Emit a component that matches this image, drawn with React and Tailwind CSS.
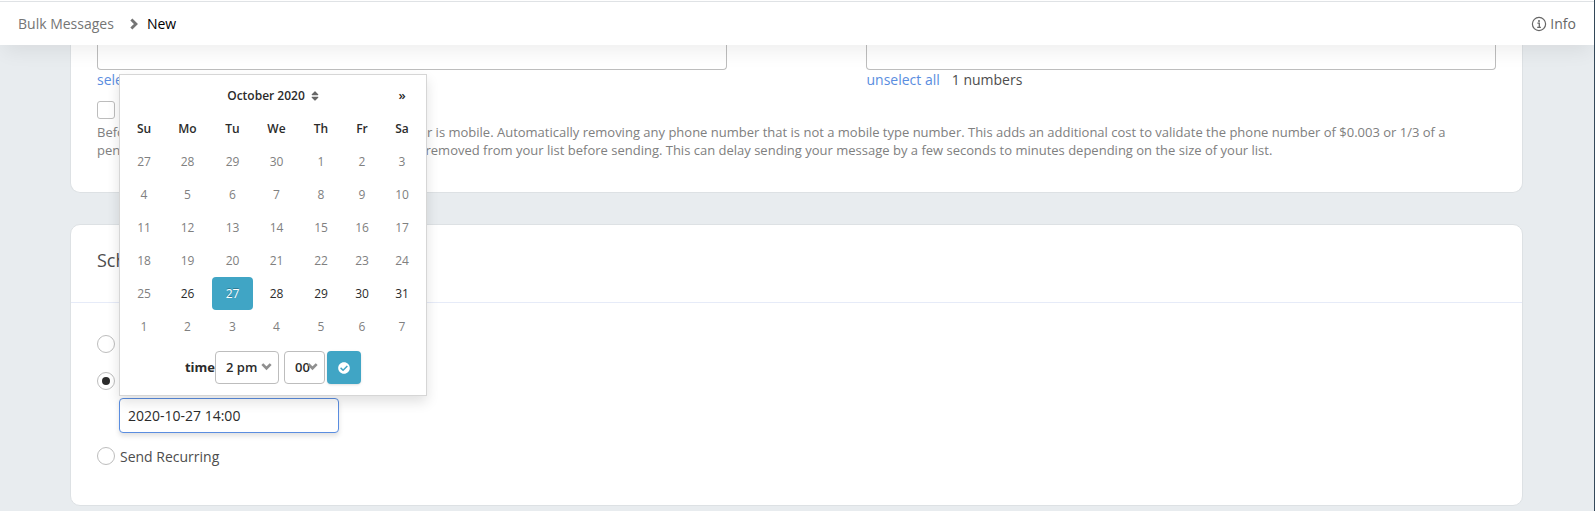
import { useState } from 'react';
import { FaCheckCircle, FaSort } from 'react-icons/fa';

const WEEKDAYS = ['Su', 'Mo', 'Tu', 'We', 'Th', 'Fr', 'Sa'];
const HOURS = Array.from({ length: 24 }, (_, h) => `${h % 12 || 12} ${h < 12 ? 'am' : 'pm'}`);
const MINUTES = ['00', '15', '30', '45'];
const TODAY = new Date(2020, 9, 26);

function buildWeeks(year, month) {
  const startPad = new Date(year, month, 1).getDay();
  return Array.from({ length: 6 }, (_, w) =>
    Array.from({ length: 7 }, (_, d) => new Date(year, month, 1 - startPad + w * 7 + d))
  );
}

function Chevron({ className }) {
  return (
    <svg viewBox="0 0 10 10" fill="none" stroke="currentColor" strokeWidth="2.4" className={className}>
      <path d="M1.2 2.8 L5 6.6 L8.8 2.8" />
    </svg>
  );
}

function InfoIcon({ className }) {
  return (
    <svg viewBox="0 0 16 16" fill="none" stroke="currentColor" strokeWidth="1.2" className={className}>
      <circle cx="8" cy="8" r="6.6" />
      <circle cx="8" cy="4.9" r="1" fill="currentColor" stroke="none" />
      <path d="M6.4 7.2 H8.3 V11.2 M6.2 11.3 H9.9" strokeWidth="1.3" />
    </svg>
  );
}

function TimeSelect({ label, value, options, onChange, className }) {
  return (
    <div className={`relative ${className}`}>
      <select
        aria-label={label}
        value={value}
        onChange={(e) => onChange(e.target.value)}
        className="h-[33px] w-full appearance-none rounded border border-[#bdbdbd] bg-white pl-2.5 text-[13px] font-semibold text-[#2b2b2b] outline-none"
      >
        {options.map((o) => (
          <option key={o}>{o}</option>
        ))}
      </select>
      <Chevron className="pointer-events-none absolute top-2.5 right-[7px] size-[11px] text-[#8f8f8f]" />
    </div>
  );
}

function DateTimePicker({ day, onDay, hour, onHour, minute, onMinute }) {
  const weeks = buildWeeks(2020, 9);

  return (
    <div className="absolute bottom-full left-0 z-10 mb-0.5 w-[308px] border border-[#d6d6d6] bg-white px-[5px] pt-1 pb-[11px] text-[13px] text-[#2b2b2b] shadow-[0_6px_12px_rgba(0,0,0,0.12)]">
      <div className="grid h-[33px] grid-cols-[40px_1fr_38px] items-center">
        <span />
        <button type="button" className="flex items-center justify-center gap-1 text-[12px] font-semibold">
          October 2020
          <FaSort className="size-3 text-[#666]" />
        </button>
        <button type="button" aria-label="Next month" className="font-semibold">
          »
        </button>
      </div>
      <table className="w-full table-fixed border-collapse text-center">
        <colgroup>
          <col className="w-[38px]" />
          <col className="w-[49px]" />
          <col className="w-[41px]" />
          <col className="w-[47px]" />
          <col className="w-[42px]" />
          <col className="w-[40px]" />
          <col className="w-[40px]" />
        </colgroup>
        <thead>
          <tr className="h-[33px]">
            {WEEKDAYS.map((w) => (
              <th key={w} className="p-0 text-[12px] font-semibold">
                {w}
              </th>
            ))}
          </tr>
        </thead>
        <tbody>
          {weeks.map((week) => (
            <tr key={week[0].getTime()} className="h-[33px]">
              {week.map((d) => {
                const inMonth = d.getMonth() === 9;
                const isSelected = inMonth && d.getDate() === day;
                const isMuted = !inMonth || d < TODAY;
                return (
                  <td key={d.getTime()} className="p-0">
                    <button
                      type="button"
                      disabled={isMuted}
                      onClick={() => onDay(d.getDate())}
                      className={`block h-[33px] w-full rounded text-[12px] ${
                        isSelected
                          ? 'bg-[#40a5c5] text-white [text-shadow:0_-1px_0_rgba(0,0,0,0.25)]'
                          : isMuted
                            ? 'text-[#808080]'
                            : 'text-[#2b2b2b]'
                      }`}
                    >
                      {d.getDate()}
                    </button>
                  </td>
                );
              })}
            </tr>
          ))}
        </tbody>
      </table>
      <div className="mt-2 flex items-center justify-center">
        <span className="text-[13px] font-bold">time</span>
        <TimeSelect label="Hour" value={hour} options={HOURS} onChange={onHour} className="mr-[5px] w-16" />
        <TimeSelect label="Minute" value={minute} options={MINUTES} onChange={onMinute} className="mr-0.5 w-[41px]" />
        <button
          type="button"
          aria-label="Apply"
          className="flex h-[33px] w-[34px] items-center justify-center rounded bg-[#40a5c5] text-white shadow-sm"
        >
          <FaCheckCircle className="size-3" />
        </button>
      </div>
    </div>
  );
}

function ScheduleRadio({ label, value, current, onChange }) {
  return (
    <label className="flex h-5 items-center gap-[5px] text-[14px] text-[#4d4d4d]">
      <span className="relative flex size-[18px] items-center justify-center">
        <input
          type="radio"
          name="schedule"
          value={value}
          checked={current === value}
          onChange={() => onChange(value)}
          className="peer size-[18px] appearance-none rounded-full border border-[#bdbdbd] bg-white"
        />
        <span className="pointer-events-none absolute hidden size-2 rounded-full bg-[#2b2b2b] peer-checked:block" />
      </span>
      {label}
    </label>
  );
}

export default function App() {
  const [schedule, setSchedule] = useState('later');
  const [day, setDay] = useState(27);
  const [hour, setHour] = useState('2 pm');
  const [minute, setMinute] = useState('00');
  const [mobileOnly, setMobileOnly] = useState(false);

  const sendAt = `2020-10-${String(day).padStart(2, '0')} ${HOURS.indexOf(hour)}:${minute}`;

  return (
    <div className="min-h-screen border-r border-[#34495a] bg-[#e8ecef] font-['Open_Sans','Noto_Sans',sans-serif] text-[14px] text-[#4d4d4d]">
      {/* the 1px strip above the bar is white too */}
      <div className="h-px bg-white" />
      <header className="relative z-20 flex h-11 items-center justify-between border-t border-[#dfe2e5] bg-white px-[18px] shadow-[0_10px_20px_-4px_rgba(0,0,0,0.07)]">
        <nav className="flex items-center text-[14px]">
          <a href="#bulk" className="text-[#757575]">
            Bulk Messages
          </a>
          <Chevron className="mr-[7px] ml-3.5 size-3 -rotate-90 text-[#757575]" />
          <span className="text-black">New</span>
        </nav>
        <a href="#info" className="flex items-center gap-[3px] text-[#666]">
          <InfoIcon className="size-4" />
          Info
        </a>
      </header>

      <main className="pr-[71px] pb-1.5 pl-[70px]">
        <section className="rounded-b-[10px] border border-t-0 border-[#dde1e4] bg-white px-[26px] pb-[33px]">
          <div className="flex justify-between">
            <div className="w-[45%]">
              <div className="h-[25px] rounded-b border border-t-0 border-[#bdbdbd]" />
              <a href="#select" className="block h-5 leading-5 text-[#5a8de0]">
                select all
              </a>
            </div>
            <div className="w-[45%]">
              <div className="h-[25px] rounded-b border border-t-0 border-[#bdbdbd]" />
              <div className="flex h-5 gap-3 leading-5">
                <a href="#unselect" className="text-[#5a8de0]">
                  unselect all
                </a>
                <span>1 numbers</span>
              </div>
            </div>
          </div>
          <label className="mt-[11px] flex h-[18px] items-center gap-2">
            <input
              type="checkbox"
              checked={mobileOnly}
              onChange={(e) => setMobileOnly(e.target.checked)}
              className="size-[18px] appearance-none rounded-[3px] border border-[#bdbdbd] bg-white checked:bg-[#40a5c5]"
            />
            Mobile numbers only
          </label>
          <p className="mt-1 pr-5 text-[13px] leading-[18px] text-[#808080]">
            Before sending, we will validate that the phone number is mobile. Automatically removing any phone number
            that is not a mobile type number. This adds an additional cost to validate the phone number of $0.003 or
            1/3 of a penny per number. Landline or other numbers will be removed from your list before sending.
            This can delay sending your message by a few seconds to minutes depending on the size of your list.
          </p>
        </section>

        <section className="mt-[31px] rounded-[10px] border border-[#dde1e4] bg-white">
          <h2 className="flex h-[78px] items-center border-b border-[#e6ebf8] px-[26px] pb-1.5 text-[18px]">
            Schedule
          </h2>
          <div className="px-[26px] pt-[31px] pb-[39px]">
            <ScheduleRadio label="Send Now" value="now" current={schedule} onChange={setSchedule} />
            <div className="mt-[17px]">
              <ScheduleRadio label="Send Later" value="later" current={schedule} onChange={setSchedule} />
            </div>
            <div className="relative mt-[7px] ml-[22px] w-[220px]">
              <DateTimePicker
                day={day}
                onDay={setDay}
                hour={hour}
                onHour={setHour}
                minute={minute}
                onMinute={setMinute}
              />
              <input
                type="text"
                aria-label="Send at"
                value={sendAt}
                readOnly
                className="block h-[35px] w-full rounded border border-[#5a8de0] bg-white px-2 text-[14px] text-[#2b2b2b] shadow-[0_3px_5px_rgba(0,0,0,0.12)] outline-none"
              />
            </div>
            <div className="mt-[13px]">
              <ScheduleRadio label="Send Recurring" value="recurring" current={schedule} onChange={setSchedule} />
            </div>
          </div>
        </section>
      </main>
    </div>
  );
}
